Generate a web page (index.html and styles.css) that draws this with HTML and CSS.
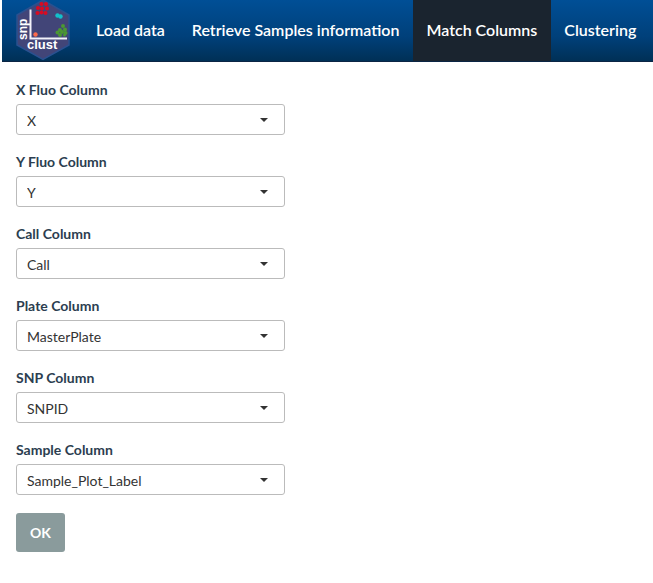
FILE: index.html
```html
<!DOCTYPE html>
<html lang="en">
<head>
<meta charset="utf-8">
<meta name="viewport" content="width=device-width, initial-scale=1">
<title>snpclust</title>
<link rel="stylesheet" href="styles.css">
</head>
<body>
<nav class="navbar">
  <a class="brand" href="#" aria-label="snpclust">
    <svg class="logo" width="54" height="62" viewBox="0 0 54 62">
      <path d="M27 0 53 15V45L27 59.500 1 45V15Z" fill="#424578" stroke="#2a5190" stroke-width="1.500"/>
      <path d="M14.500 9.500V38.500H51" fill="none" stroke="#f2f2fa" stroke-width="2"/>
      <g fill="#d80b22">
        <circle cx="22" cy="8" r="2"/><circle cx="25.500" cy="4" r="2"/><circle cx="30" cy="4" r="2"/>
        <circle cx="21.500" cy="13" r="2"/><circle cx="26" cy="8.500" r="2"/><circle cx="31" cy="8.500" r="2"/>
        <circle cx="25.500" cy="12.500" r="2"/><circle cx="29.500" cy="13" r="2"/>
      </g>
      <g fill="#12bfca"><circle cx="41.500" cy="15.500" r="2.200"/><circle cx="44.500" cy="16.500" r="2.200"/></g>
      <g fill="#4b9733">
        <circle cx="47" cy="26" r="2"/><circle cx="44" cy="30" r="2"/><circle cx="49" cy="29.500" r="2"/>
        <circle cx="41.500" cy="32.500" r="2"/><circle cx="46" cy="32" r="2"/><circle cx="49.500" cy="33" r="2"/>
        <circle cx="44" cy="35" r="2"/><circle cx="48.500" cy="35" r="1.500"/>
      </g>
      <circle cx="19.500" cy="34.500" r="2.200" fill="#fb6a4a"/>
      <text class="logo-text logo-side" transform="translate(11 40) rotate(-90)">snp</text>
      <text class="logo-text" x="11" y="49">clust</text>
    </svg>
  </a>
  <a class="tab" href="#">Load data</a>
  <a class="tab" href="#">Retrieve Samples information</a>
  <a class="tab active" href="#" aria-current="page">Match Columns</a>
  <a class="tab" href="#">Clustering</a>
</nav>
<main>
  <form class="columns-form">
    <div class="field"><label for="x">X Fluo Column</label><select id="x"><option>X</option></select></div>
    <div class="field"><label for="y">Y Fluo Column</label><select id="y"><option>Y</option></select></div>
    <div class="field"><label for="call">Call Column</label><select id="call"><option>Call</option></select></div>
    <div class="field"><label for="plate">Plate Column</label><select id="plate"><option>MasterPlate</option></select></div>
    <div class="field"><label for="snp">SNP Column</label><select id="snp"><option>SNPID</option></select></div>
    <div class="field"><label for="sample">Sample Column</label><select id="sample"><option>Sample_Plot_Label</option></select></div>
    <button class="ok" type="button">OK</button>
  </form>
</main>
</body>
</html>
```
FILE: styles.css
```css
* {
  box-sizing: border-box;
}

body {
  margin: 0;
  background: #fff;
  color: #2c3e50;
  font-family: Lato, "Liberation Sans", sans-serif;
  font-size: 14px;
}

.navbar {
  display: flex;
  height: 62px;
  margin-left: 2px;
  background: linear-gradient(#004f96, #00407a 60%, #003056);
  border-bottom: 1px solid #0b2544;
  overflow: hidden;
}

.brand {
  flex: none;
  padding: 0 13px 0 14px;
}

.logo {
  display: block;
}

.logo-text {
  fill: #fff;
  font: bold 13px "Liberation Sans", sans-serif;
}

.logo-side {
  font-size: 12px;
}

.tab {
  padding: 0 14px 0 13px;
  color: #fff;
  font-size: 16px;
  font-weight: 600;
  line-height: 60px;
  text-decoration: none;
  white-space: nowrap;
}

.tab.active {
  background: #1a242f;
}

.columns-form {
  max-width: 301px;
  padding: 19px 16px;
}

.field {
  margin-bottom: 18px;
}

label {
  display: block;
  margin-bottom: 5px;
  font-weight: 700;
  line-height: 18px;
}

select {
  display: block;
  width: 100%;
  height: 31px;
  padding: 1px 10px 0;
  appearance: none;
  border: 1px solid #bbb;
  border-radius: 3px;
  background: url("data:image/svg+xml,%3Csvg xmlns='http://www.w3.org/2000/svg' width='8' height='4'%3E%3Cpath d='M0 0h8L4 4z' fill='%23333'/%3E%3C/svg%3E") no-repeat right 16px center;
  color: #333;
  font: inherit;
}

.ok {
  width: 49px;
  height: 39px;
  padding: 0;
  border: 0;
  border-radius: 3px;
  background: #8a9b9c;
  color: #fff;
  font: inherit;
  font-weight: 700;
}
```
